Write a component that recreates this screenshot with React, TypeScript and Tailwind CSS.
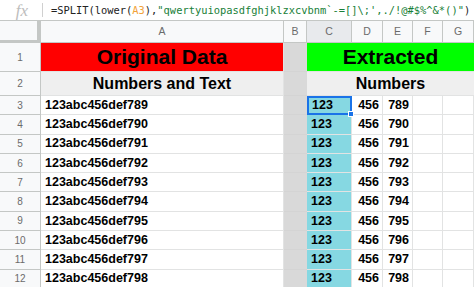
import React from "react";

const cols = ["A", "B", "C", "D", "E", "F", "G"];

const rows = Array.from({ length: 10 }, (_, i) => ({
  n: i + 3,
  text: `123abc456def${789 + i}`,
  c: "123",
  d: "456",
  e: String(789 + i),
}));

const rowHead =
  "flex items-center justify-center bg-[#f8f9fa] border-r border-b border-[#c4c7c5] text-[10px] text-[#6b6b6b]";
const cell = "flex items-center border-r border-b border-[#e2e3e3]";

function FormulaBar() {
  return (
    <div className="flex h-[21px] items-center border-b border-[#c4c7c5] bg-white">
      <div className="flex w-[42px] items-center justify-center">
        <span className="pl-[2px] text-[17px] italic leading-none text-[#bdbdbd] [font-family:'Liberation_Serif',serif]">
          fx
        </span>
      </div>
      <div className="h-[14px] border-l border-[#d0d0d0]" />
      <div className="whitespace-nowrap pl-[8px] text-[10.4px] leading-none text-[#222] [font-family:'DejaVu_Sans_Mono',monospace]">
        =SPLIT(lower(<span className="text-[#f1a23a]">A3</span>),
        <span className="text-[#188038]">"qwertyuiopasdfghjklzxcvbnm`-=[]\;',./!@#$%^&amp;*()"</span>)
      </div>
    </div>
  );
}

export default function App() {
  return (
    <div className="h-[287px] w-[474px] overflow-hidden bg-white [font-family:'Liberation_Sans',Arial,sans-serif]">
      <FormulaBar />
      <div className="grid grid-cols-[41px_243px_23px_45px_31px_30px_30px_31px] grid-rows-[22px_29px_24px_repeat(10,19.3px)]">
        {/* header row */}
        <div className="border-r-[4px] border-b-[3px] border-[#c4c7c5] bg-[#f8f9fa]" />
        {cols.map((c) => (
          <div
            key={c}
            className={`flex items-center justify-center border-r border-b border-[#c4c7c5] text-[10.5px] text-[#6b6b6b] ${
              c === "C" ? "bg-[#e8eaed]" : "bg-[#f8f9fa]"
            }`}
          >
            {c}
          </div>
        ))}

        {/* row 1 */}
        <div className={rowHead}>1</div>
        <div className="flex items-center justify-center border-r border-b border-[#e2e3e3] bg-[#ff0000] text-[21px] font-bold text-black">
          Original Data
        </div>
        <div className="border-b border-[#d4d4d4] bg-[#d9d9d9]" />
        <div className="col-span-5 flex items-center justify-center border-b border-[#e2e3e3] bg-[#00ff00] text-[21px] font-bold text-black">
          Extracted
        </div>

        {/* row 2 */}
        <div className={rowHead}>2</div>
        <div className="flex items-center justify-center border-r border-b border-[#e2e3e3] bg-[#efefef] text-[16px] font-bold text-black">
          Numbers and Text
        </div>
        <div className="border-b border-[#d4d4d4] bg-[#d9d9d9]" />
        <div className="col-span-5 flex items-center justify-center border-b border-[#e2e3e3] bg-[#efefef] text-[16px] font-bold text-black">
          Numbers
        </div>

        {rows.map((r) => (
          <React.Fragment key={r.n}>
            <div className={rowHead}>{r.n}</div>
            <div className={`${cell} pl-[4px] text-[12.5px] font-bold text-black`}>{r.text}</div>
            <div className="border-b border-[#d4d4d4] bg-[#d9d9d9]" />
            {r.n === 3 ? (
              <div className="relative flex items-center border-2 border-[#1a73e8] bg-[#86d8e2] pl-[3px] text-[12.5px] font-bold text-black">
                {r.c}
                <span className="absolute -right-[4px] -bottom-[4px] h-[6px] w-[6px] border border-white bg-[#1a73e8]" />
              </div>
            ) : (
              <div className={`${cell} bg-[#86d8e2] pl-[4px] text-[12.5px] font-bold text-black`}>{r.c}</div>
            )}
            <div className={`${cell} justify-end pr-[3px] text-[12.5px] font-bold text-black`}>{r.d}</div>
            <div className={`${cell} justify-end pr-[3px] text-[12.5px] font-bold text-black`}>{r.e}</div>
            <div className={cell} />
            <div className={cell} />
          </React.Fragment>
        ))}
      </div>
    </div>
  );
}
